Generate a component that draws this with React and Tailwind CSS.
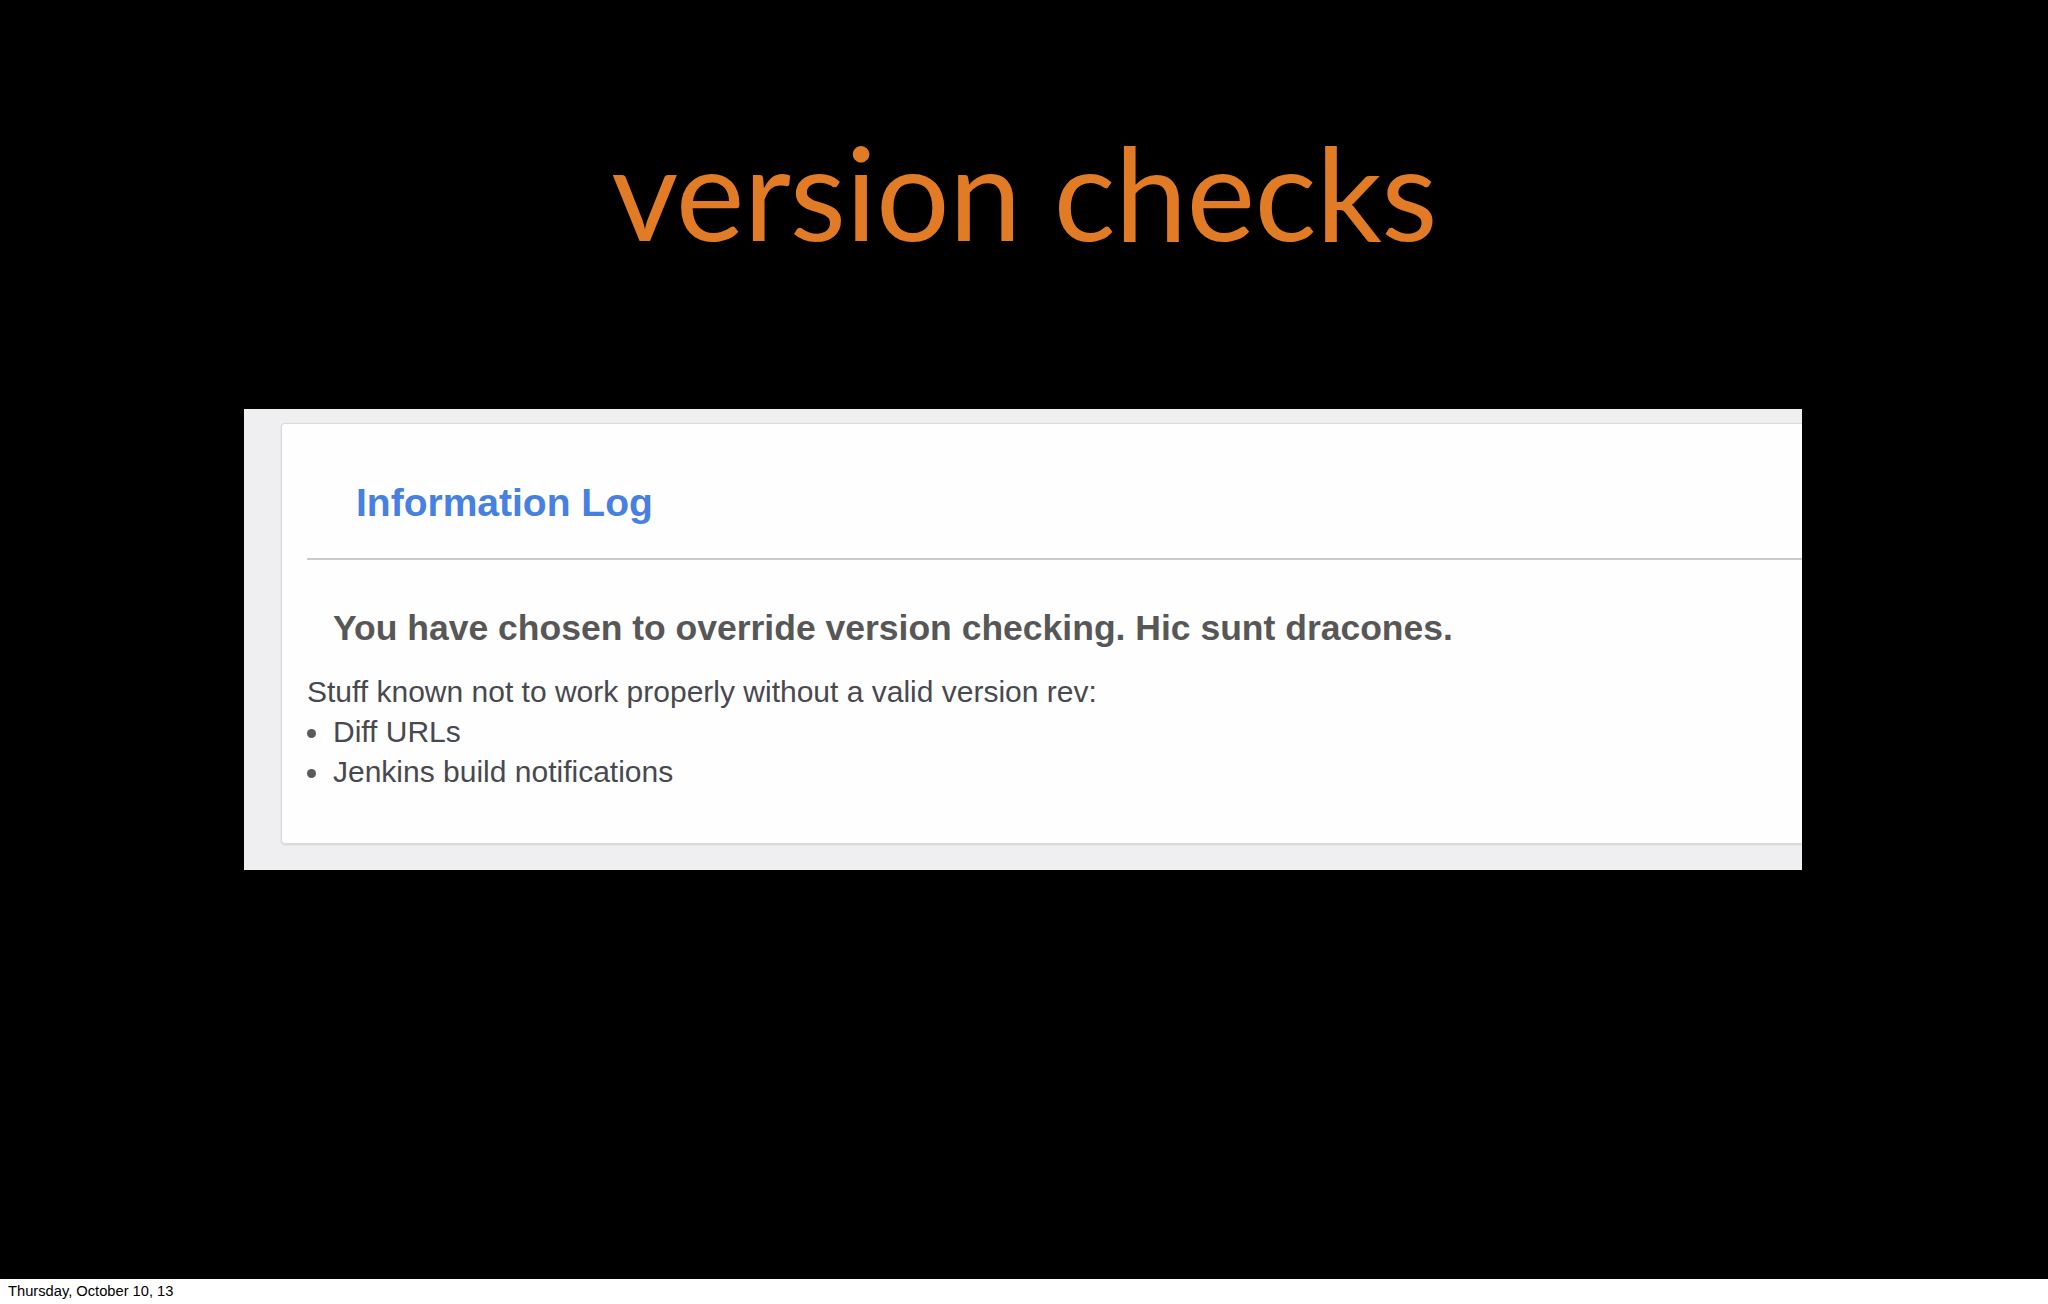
import React from 'react';

const items = ['Diff URLs', 'Jenkins build notifications'];

const App = () => {
  return (
    <div className="flex flex-col w-[2048px] h-[1304px] bg-black overflow-hidden">
      <div className="h-[1279px] flex flex-col">
        {/* slide title */}
        <h1 className="pt-[126px] text-center text-[130px] tracking-[-0.7px] leading-none text-[#e27b26] font-['Lato',sans-serif] font-normal">
          version checks
        </h1>

        {/* screenshot panel */}
        <div className="mt-[153px] ml-[244px] w-[1558px] h-[461px] bg-[#efeef0] pt-[14px] pb-[26px] pl-[37px] flex">
          <div className="flex-1 bg-[#fefefe] border border-r-0 border-[#dadada] rounded-l-[4px] shadow-[0_1px_2px_rgba(0,0,0,0.12)] pl-[25px] font-['Liberation_Sans',Arial,sans-serif]">
            <h2 className="mt-[59px] ml-[49px] text-[39px] leading-none font-bold text-[#4680e2]">
              Information Log
            </h2>
            <div className="mt-[36px] h-[2px] bg-[#cbcbcb]" />
            <p className="mt-[51px] ml-[26px] text-[35.5px] leading-none font-bold text-[#575757]">
              You have chosen to override version checking. Hic sunt dracones.
            </p>
            <div className="mt-[25px] text-[30px] leading-[40px] text-[#484950]">
              <p>Stuff known not to work properly without a valid version rev:</p>
              <ul>
                {items.map((item) => (
                  <li key={item} className="flex items-center">
                    <span className="w-[26px] flex">
                      <span className="w-[9px] h-[9px] rounded-full bg-[#5a5a5e] mt-[3px]" />
                    </span>
                    <span>{item}</span>
                  </li>
                ))}
              </ul>
            </div>
          </div>
        </div>
      </div>

      {/* footer */}
      <div className="h-[25px] bg-white pl-[8px] text-[14.7px] leading-[24px] text-black font-['Liberation_Sans',Arial,sans-serif]">
        Thursday, October 10, 13
      </div>
    </div>
  );
};

export default App;
